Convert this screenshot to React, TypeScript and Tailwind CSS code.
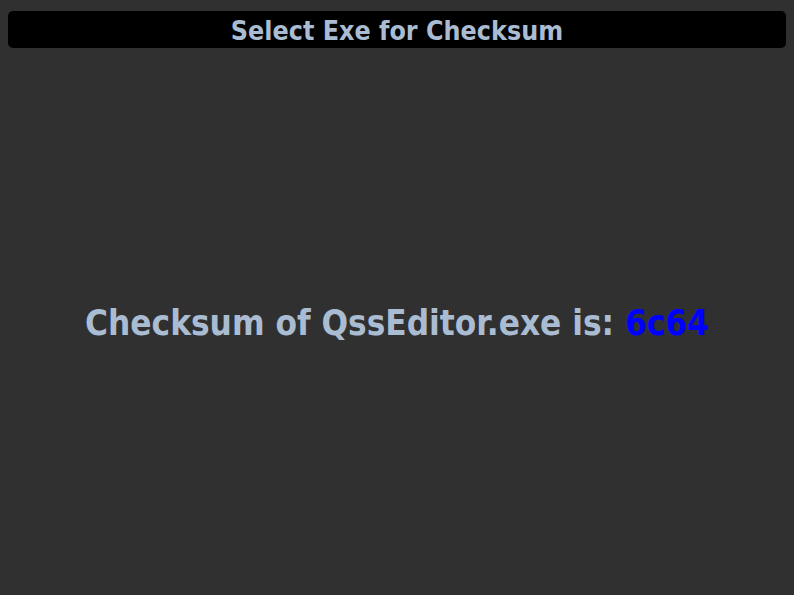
export default function App() {
  return (
    <div
      className="flex h-[595px] w-[794px] flex-col bg-[#303030] px-2 pt-[11px]"
      style={{ fontFamily: '"DejaVu Sans Condensed", "DejaVu Sans", sans-serif' }}
    >
      {/* Title bar */}
      <div className="flex h-[37px] items-center justify-center rounded-[5px] bg-black pt-[3px]">
        <span className="text-[26.6px] font-bold leading-none text-[#aabcd2]">
          Select Exe for Checksum
        </span>
      </div>

      {/* Result */}
      <div className="flex flex-1 items-center justify-center pt-[4px]">
        <p className="text-[34.8px] font-bold leading-none text-[#aabcd2]">
          Checksum of QssEditor.exe is: <span className="text-[#0000ff]">6c64</span>
        </p>
      </div>
    </div>
  );
}
